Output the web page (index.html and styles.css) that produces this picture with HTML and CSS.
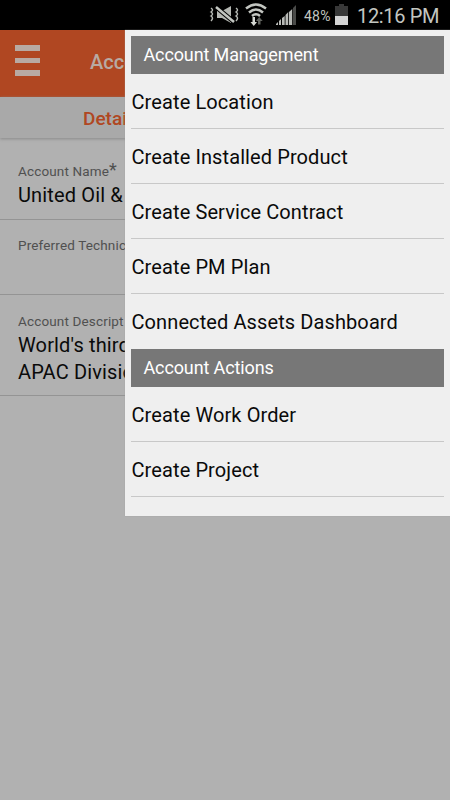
FILE: index.html
```html
<!DOCTYPE html>
<html lang="en">
<head>
    <meta charset="UTF-8">
    <title>Account</title>
    <link rel="stylesheet" href="styles.css">
</head>
<body>
    <div class="status-bar">
        <svg class="icon-mute" width="30" height="20" viewBox="0 0 30 20">
            <path d="M8 6h5l9-5v17l-9-5H8z" fill="#b5b8b3"/>
            <path d="M7 2l18 15" stroke="#000" stroke-width="4.500"/>
            <path d="M7 2l18 15" stroke="#c3c6c1" stroke-width="2.500"/>
            <path d="M2 3q3 2 0 4 3 2 0 4 3 2 0 5M27 3q3 2 0 4 3 2 0 4 3 2 0 5" fill="none" stroke="#b5b8b3" stroke-width="1.500"/>
        </svg>
        <svg class="icon-wifi" width="22" height="24" viewBox="0 0 22 24">
            <g fill="none" stroke="#c3c6c1" stroke-width="2.500">
                <path d="M1 5.500q10-8 20 0"/>
                <path d="M4 9.500q7-6 14 0"/>
                <path d="M7 13q4-3.500 8 0"/>
            </g>
            <path d="M7.500 14h2.500v5h2l-3.250 4L5.500 19h2z" fill="#d5d8d3"/>
            <path d="M13 21.500h2.500V18h2.200l-3.450-4-3.250 4h2z" fill="#62645f"/>
        </svg>
        <svg class="icon-signal" width="21" height="20" viewBox="0 0 21 20">
            <path d="M0 20v-1l2-2v3zM3 20v-4l2-2v6zM6 20v-7l2.700-2v9zM9.500 20V10l2.700-3v13zM13 20V7l3.200-3v16z" fill="#b8bab6"/>
            <path d="M17 20V3l3-3v20z" fill="#4a4b49"/>
        </svg>
        <span class="battery-level">48%</span>
        <svg class="icon-battery" width="13" height="21" viewBox="0 0 13 21">
            <path d="M4 0h5v2h4v10H0V2h4z" fill="#383838"/>
            <path d="M0 12h13v9H0z" fill="#d4d4d4"/>
        </svg>
        <span class="clock">12:16 PM</span>
    </div>

    <div class="screen">
        <div class="header">
            <div class="hamburger">
                <span></span>
                <span></span>
                <span></span>
            </div>
            <div class="title">Acco</div>
        </div>
        <div class="tabs">
            <div class="tab">Details</div>
        </div>
        <div class="field name">
            <div class="label">Account Name<span class="required">*</span></div>
            <div class="value">United Oil &amp;</div>
        </div>
        <div class="field technician">
            <div class="label">Preferred Technic</div>
        </div>
        <div class="field description">
            <div class="label">Account Descript</div>
            <div class="value">World's third<br>APAC Divisio</div>
        </div>

        <div class="menu">
            <div class="menu-title">Account Management</div>
            <div class="menu-item">Create Location</div>
            <div class="menu-item">Create Installed Product</div>
            <div class="menu-item">Create Service Contract</div>
            <div class="menu-item">Create PM Plan</div>
            <div class="menu-item last">Connected Assets Dashboard</div>
            <div class="menu-title">Account Actions</div>
            <div class="menu-item">Create Work Order</div>
            <div class="menu-item">Create Project</div>
        </div>
    </div>
</body>
</html>
```

FILE: styles.css
```css
* {
    box-sizing: border-box;
}
body {
    margin: 0;
    height: 800px;
    overflow: hidden;
    background-color: #b1b1b1;
    color: #0a0a0a;
    font-family: Roboto, "Liberation Sans", sans-serif;
    white-space: nowrap;
}
.status-bar {
    display: flex;
    height: 30px;
    padding-left: 209px;
    background-color: #000;
    color: #c3c6c1;
}
.status-bar svg {
    flex: none;
}
.icon-mute {
    margin-top: 5px;
}
.icon-wifi {
    margin: 3px 0 0 6px;
}
.icon-signal {
    margin: 5px 0 0 9px;
}
.battery-level {
    width: 31px;
    margin-left: 7px;
    font-size: 14px;
    letter-spacing: 0.2px;
    line-height: 32px;
}
.icon-battery {
    margin: 4px 0 0 0;
}
.clock {
    margin-left: 9px;
    font-size: 20px;
    letter-spacing: -0.35px;
    line-height: 32px;
}
.screen {
    position: relative;
    height: 770px;
}
.header {
    display: flex;
    height: 67px;
    background-color: #b04722;
}
.hamburger {
    display: flex;
    flex-direction: column;
    gap: 7px;
    width: 25px;
    margin: 15px 0 0 15px;
}
.hamburger span {
    height: 5.500px;
    background-color: #b8aaa3;
}
.title {
    margin-left: 50px;
    color: #b8aaa3;
    font-size: 20px;
    font-weight: 500;
    line-height: 64px;
}
.tabs {
    height: 41px;
    padding-left: 83px;
    background-color: #a9a9a9;
    box-shadow: 0 1px 3px #888;
}
.tab {
    color: #b04722;
    font-size: 19px;
    font-weight: 500;
    line-height: 43px;
}
.field {
    padding-left: 18px;
    border-bottom: 1px solid #949494;
}
.name {
    height: 82px;
    padding-top: 23px;
}
.technician {
    height: 75px;
    padding-top: 15px;
}
.description {
    height: 101px;
    padding-top: 16px;
}
.label {
    height: 20px;
    color: #505050;
    font-size: 13.500px;
    letter-spacing: 0.15px;
    line-height: 20px;
}
.required {
    font-size: 18px;
    line-height: 1;
}
.value {
    padding-top: 1px;
    font-size: 20px;
    letter-spacing: 0.15px;
    line-height: 27px;
}
.menu {
    position: absolute;
    top: 0;
    left: 125px;
    width: 325px;
    height: 486px;
    padding: 6px 6px 0;
    background-color: #efefef;
    box-shadow: 0 0 1px #999;
}
.menu-title {
    height: 37.500px;
    padding-left: 12.500px;
    background-color: #777;
    color: #fff;
    font-size: 18px;
    letter-spacing: -0.12px;
    line-height: 38px;
}
.menu-title:first-child {
    line-height: 37px;
}
.menu-item {
    height: 55.200px;
    padding-left: 0.500px;
    border-bottom: 1px solid #c8c8c8;
    font-size: 20px;
    letter-spacing: 0.1px;
    line-height: 57px;
}
.last {
    border-bottom: none;
}
```
